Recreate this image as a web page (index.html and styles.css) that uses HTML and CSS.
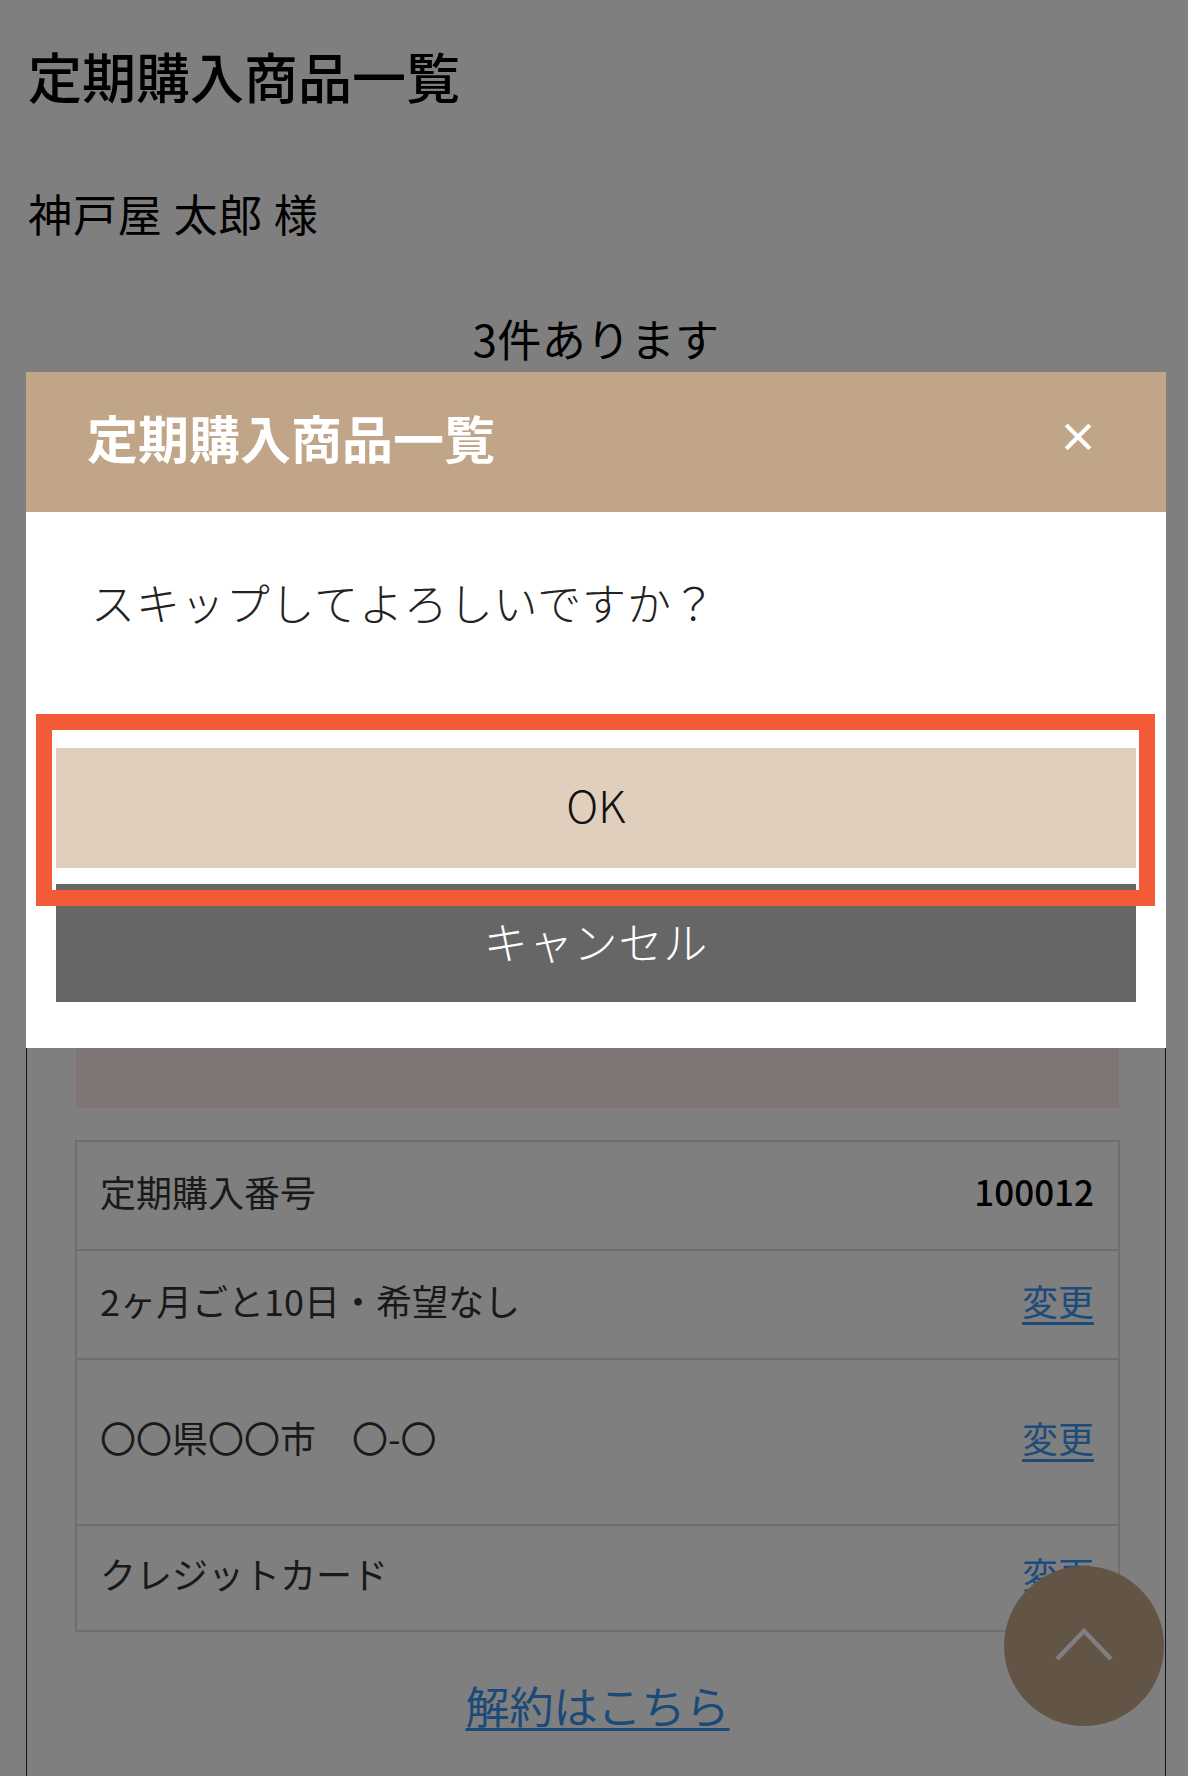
FILE: index.html
```html
<!DOCTYPE html>
<html lang="ja">
<head>
    <meta charset="UTF-8">
    <title>定期購入商品一覧</title>
    <meta name="viewport" content="width=device-width, initial-scale=1.0">
    <link rel="stylesheet" href="styles.css">
</head>
<body>

<main class="page">
    <h1 class="page-title">定期購入商品一覧</h1>
    <p class="customer">神戸屋 太郎 様</p>
    <p class="count">3件あります</p>

    <section class="card">
        <div class="product"></div>

        <div class="info">
            <div class="info-row">
                <span>定期購入番号</span>
                <strong class="number">100012</strong>
            </div>
            <div class="info-row">
                <span>2ヶ月ごと10日・希望なし</span>
                <a href="#" class="change">変更</a>
            </div>
            <div class="info-row tall">
                <span>〇〇県〇〇市　〇-〇</span>
                <a href="#" class="change">変更</a>
            </div>
            <div class="info-row last">
                <span>クレジットカード</span>
                <a href="#" class="change">変更</a>
            </div>
        </div>

        <a href="#" class="cancel-link">解約はこちら</a>
    </section>
</main>

<a href="#" class="page-top" aria-label="ページトップへ">
    <svg width="60" height="36" viewBox="0 0 60 36">
        <polyline points="3,33 30,5 57,33" fill="none" stroke="#fff" stroke-width="4.5"/>
    </svg>
</a>

<div class="overlay">
    <div class="modal">
        <div class="modal-head">
            <h2>定期購入商品一覧</h2>
            <button class="close" type="button">×</button>
        </div>
        <div class="modal-body">
            <p class="message">スキップしてよろしいですか？</p>
            <button class="btn btn-ok" type="button">OK</button>
            <button class="btn btn-cancel" type="button">キャンセル</button>
        </div>
        <div class="highlight"></div>
    </div>
</div>

</body>
</html>
```

FILE: styles.css
```css
body { margin: 0; background: #fff; color: #000; font-family: "Noto Sans CJK JP", "Noto Sans", sans-serif; overflow: hidden; }
p, h1, h2 { margin: 0; }

.page { padding: 0 22px 0 26px; }
.page-title { margin: 37px 0 0 2px; font-size: 54px; line-height: 78px; font-weight: 500; }
.customer { margin: 66px 0 0 2px; font-size: 44px; line-height: 64px; font-weight: 400; letter-spacing: 0.02em; }
.count { margin-top: 61px; text-align: center; font-size: 44px; line-height: 64px; letter-spacing: 0.01em; }

.card { border: 1px solid #2a2a2a; margin-top: 6px; padding: 0 45px 120px 48px; }
.product { height: 691px; margin: 40px 1px 0; background: #fceae8; }

.info { margin-top: 32px; border: 2px solid #dcdcdc; }
.info-row { display: flex; justify-content: space-between; align-items: center; min-height: 97px; padding: 0 24px 10px 23px; border-top: 2px solid #dcdcdc; font-size: 36px; color: #333; }
.info-row:first-child { border-top: none; }
.info-row.tall { min-height: 154px; }
.info-row.last { min-height: 94px; }
.number { font-weight: 500; font-size: 35px; color: #000; }
.change { color: #3a96f4; text-decoration: underline; text-underline-offset: 6px; }

.cancel-link { display: block; width: max-content; margin: 40px auto 0; font-size: 44px; line-height: 66px; color: #3694f0; text-decoration: underline; text-decoration-thickness: 3px; text-underline-offset: 4px; }

.page-top { position: fixed; right: 24px; bottom: 50px; width: 160px; height: 160px; border-radius: 50%; background: #c6aa8c; display: flex; align-items: center; justify-content: center; }
.page-top svg { margin-top: -4px; }

.overlay { position: fixed; inset: 0; background: rgba(0, 0, 0, 0.5); padding: 372px 22px 0 26px; }
.modal { position: relative; background: #fff; }
.modal-head { display: flex; justify-content: space-between; align-items: center; height: 140px; padding: 0 68px 0 61px; background: #c1a588; color: #fff; }
.modal-head h2 { font-size: 51px; font-weight: 700; line-height: 1; margin-top: -9px; }
.close { background: none; border: none; padding: 0; color: #fff; font-family: inherit; font-size: 40px; font-weight: 700; line-height: 1; margin-top: -14px; }

.modal-body { display: flex; flex-direction: column; gap: 16px; padding: 0 30px 46px; }
.message { padding: 57px 35px 0; margin-bottom: 97px; font-size: 44px; line-height: 66px; font-weight: 300; color: #222; letter-spacing: 0.02em; }
.btn { border: none; font-family: inherit; font-size: 44px; font-weight: 300; }
.btn-ok { height: 120px; padding-bottom: 10px; background: #e0cfbd; color: #111; }
.btn-cancel { height: 118px; padding-bottom: 6px; background: #666; color: #fff; letter-spacing: 0.02em; }

.highlight { position: absolute; left: 10px; top: 342px; width: 1119px; height: 192px; border: 16px solid #f25a38; box-sizing: border-box; }
```
